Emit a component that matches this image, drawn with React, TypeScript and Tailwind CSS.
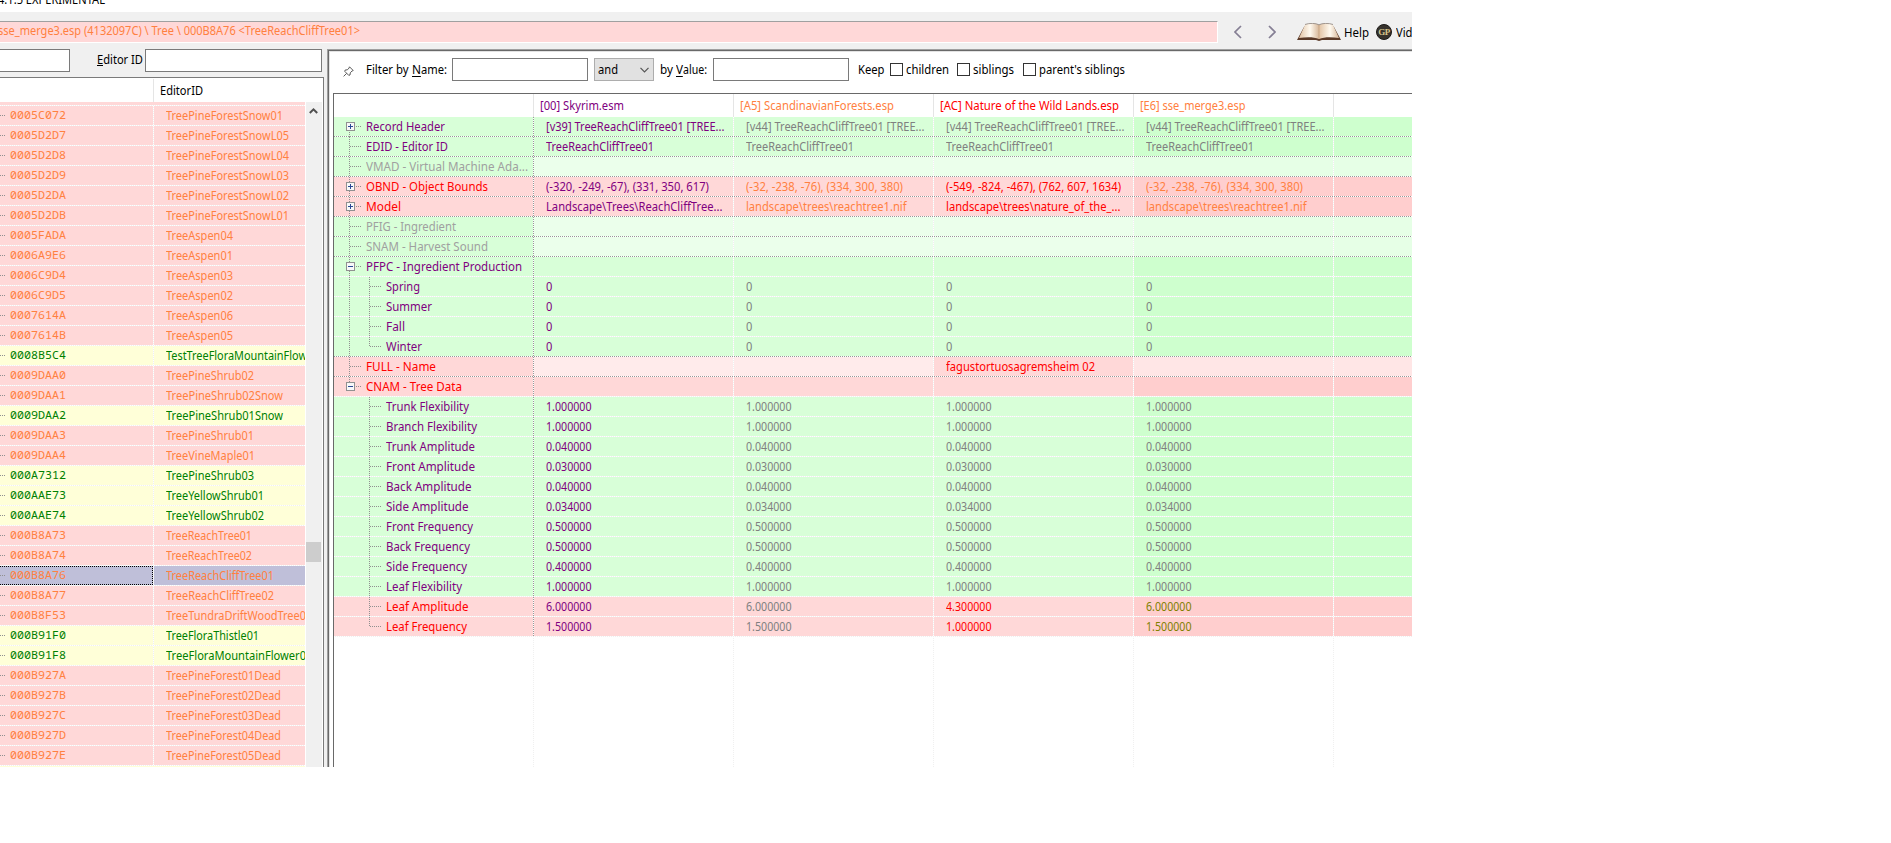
import { useLayoutEffect, useRef } from "react";

const SANS = "font-['Noto_Sans','Open_Sans',sans-serif]";
const MONO = "font-['Noto_Sans_Mono','DejaVu_Sans_Mono',monospace]";

const H_LIGHT = "bg-[repeating-linear-gradient(90deg,#ffffff_0_1px,#f0f0f0_1px_2px)]";
const H_DARK = "bg-[repeating-linear-gradient(90deg,#989898_0_1px,#ffffff_1px_2px)]";
const V_LIGHT = "bg-[repeating-linear-gradient(180deg,#ffffff_0_1px,#f0f0f0_1px_2px)]";
const V_DARK = "bg-[repeating-linear-gradient(180deg,#989898_0_1px,#ffffff_1px_2px)]";
const H_TREE = "bg-[repeating-linear-gradient(90deg,#909090_0_1px,transparent_1px_2px)]";
const V_TREE = "bg-[repeating-linear-gradient(180deg,#909090_0_1px,transparent_1px_2px)]";

/** Text condensed horizontally to a given width (or to the default condensed ratio). */
function Fit({ children, w, className = "" }: { children: string; w?: number; className?: string }) {
  const ref = useRef<HTMLSpanElement>(null);
  useLayoutEffect(() => {
    const el = ref.current;
    if (!el) return;
    el.style.transform = "none";
    el.style.marginRight = "0px";
    const natural = el.getBoundingClientRect().width;
    const target = w ?? natural * 0.925;
    el.style.transform = `scaleX(${target / natural})`;
    el.style.marginRight = `${target - natural}px`;
  }, [children, w]);
  return (
    <span ref={ref} className={`inline-block shrink-0 origin-left whitespace-pre ${className}`}>
      {children}
    </span>
  );
}

type Rec = [id: string, name: string, w?: number, ok?: boolean];
const records: Rec[] = [
  ["0005C072", "TreePineForestSnow01", 117],
  ["0005D2D7", "TreePineForestSnowL05", 123],
  ["0005D2D8", "TreePineForestSnowL04", 123],
  ["0005D2D9", "TreePineForestSnowL03", 123],
  ["0005D2DA", "TreePineForestSnowL02", 123],
  ["0005D2DB", "TreePineForestSnowL01", 123],
  ["0005FADA", "TreeAspen04", 67],
  ["0006A9E6", "TreeAspen01", 67],
  ["0006C9D4", "TreeAspen03", 67],
  ["0006C9D5", "TreeAspen02", 67],
  ["0007614A", "TreeAspen06", 67],
  ["0007614B", "TreeAspen05", 67],
  ["0008B5C4", "TestTreeFloraMountainFlow", 141, true],
  ["0009DAA0", "TreePineShrub02", 88],
  ["0009DAA1", "TreePineShrub02Snow", 117],
  ["0009DAA2", "TreePineShrub01Snow", 117, true],
  ["0009DAA3", "TreePineShrub01", 88],
  ["0009DAA4", "TreeVineMaple01", 89],
  ["000A7312", "TreePineShrub03", 88, true],
  ["000AAE73", "TreeYellowShrub01", 98, true],
  ["000AAE74", "TreeYellowShrub02", 98, true],
  ["000B8A73", "TreeReachTree01", 86],
  ["000B8A74", "TreeReachTree02", 86],
  ["000B8A76", "TreeReachCliffTree01", 108],
  ["000B8A77", "TreeReachCliffTree02", 108],
  ["000B8F53", "TreeTundraDriftWoodTree0", 140],
  ["000B91F0", "TreeFloraThistle01", 93, true],
  ["000B91F8", "TreeFloraMountainFlower0", 140, true],
  ["000B927A", "TreePineForest01Dead", 115],
  ["000B927B", "TreePineForest02Dead", 115],
  ["000B927C", "TreePineForest03Dead", 115],
  ["000B927D", "TreePineForest04Dead", 115],
  ["000B927E", "TreePineForest05Dead", 115],
];

const P = "text-[#800080]";
const R = "text-[#ff0000]";
const O = "text-[#ff8040]";
const G = "text-[#808080]";
const L = "text-[#a0a0a0]";
const Y = "text-[#808000]";

type Cell = [text: string, color: string, w?: number];
interface Row {
  label: string;
  w?: number;
  color: string;
  red?: boolean;
  level?: 0 | 1;
  box?: "+" | "-";
  empty?: boolean;
  dark?: boolean;
  pass?: boolean;
  last?: boolean;
  cells?: (Cell | null)[];
}

const nums = (label: string, v: string, w: number): Row => ({
  label, w, color: P, level: 1,
  cells: [[v, P, 45.5], [v, G, 45.5], [v, G, 45.5], [v, G, 45.5]],
});
const season = (label: string, w: number, last = false): Row => ({
  label, w, color: P, level: 1, pass: true, last, dark: last,
  cells: [["0", P], ["0", G], ["0", G], ["0", G]],
});

const rows: Row[] = [
  {
    label: "Record Header", w: 79, color: P, box: "+", dark: true,
    cells: [
      ["[v39] TreeReachCliffTree01 [TREE...", P, 178.5],
      ["[v44] TreeReachCliffTree01 [TREE...", G, 178.5],
      ["[v44] TreeReachCliffTree01 [TREE...", G, 178.5],
      ["[v44] TreeReachCliffTree01 [TREE...", G, 178.5],
    ],
  },
  {
    label: "EDID - Editor ID", w: 82, color: P, dark: true,
    cells: [
      ["TreeReachCliffTree01", P, 108],
      ["TreeReachCliffTree01", G, 108],
      ["TreeReachCliffTree01", G, 108],
      ["TreeReachCliffTree01", G, 108],
    ],
  },
  { label: "VMAD - Virtual Machine Ada...", w: 162, color: L, empty: true, dark: true },
  {
    label: "OBND - Object Bounds", w: 122, color: R, red: true, box: "+", dark: true,
    cells: [
      ["(-320, -249, -67), (331, 350, 617)", P, 163],
      ["(-32, -238, -76), (334, 300, 380)", O, 157],
      ["(-549, -824, -467), (762, 607, 1634)", R, 175],
      ["(-32, -238, -76), (334, 300, 380)", O, 157],
    ],
  },
  {
    label: "Model", w: 35, color: R, red: true, box: "+", dark: true,
    cells: [
      ["Landscape\\Trees\\ReachCliffTree...", P, 176.5],
      ["landscape\\trees\\reachtree1.nif", O, 160.5],
      ["landscape\\trees\\nature_of_the_...", R, 174.5],
      ["landscape\\trees\\reachtree1.nif", O, 160.5],
    ],
  },
  { label: "PFIG - Ingredient", w: 90, color: L, empty: true, dark: true },
  { label: "SNAM - Harvest Sound", w: 122, color: L, empty: true, dark: true },
  { label: "PFPC - Ingredient Production", w: 156, color: P, box: "-" },
  season("Spring", 34),
  season("Summer", 46),
  season("Fall", 19),
  season("Winter", 36, true),
  {
    label: "FULL - Name", w: 70, color: R, red: true, empty: true, dark: true,
    cells: [null, null, ["fagustortuosagremsheim 02", R, 149], null],
  },
  { label: "CNAM - Tree Data", w: 96, color: R, red: true, box: "-" },
  nums("Trunk Flexibility", "1.000000", 83),
  nums("Branch Flexibility", "1.000000", 91),
  nums("Trunk Amplitude", "0.040000", 89),
  nums("Front Amplitude", "0.030000", 89),
  nums("Back Amplitude", "0.040000", 85.5),
  nums("Side Amplitude", "0.034000", 82.5),
  nums("Front Frequency", "0.500000", 87),
  nums("Back Frequency", "0.500000", 84),
  nums("Side Frequency", "0.400000", 81),
  nums("Leaf Flexibility", "1.000000", 76),
  {
    label: "Leaf Amplitude", w: 82.5, color: R, red: true, level: 1,
    cells: [["6.000000", P, 45.5], ["6.000000", G, 45.5], ["4.300000", R, 45.5], ["6.000000", Y, 45.5]],
  },
  {
    label: "Leaf Frequency", w: 81, color: R, red: true, level: 1, last: true,
    cells: [["1.500000", P, 45.5], ["1.500000", G, 45.5], ["1.000000", R, 45.5], ["1.500000", Y, 45.5]],
  },
];

function cellBg(row: Row, col: number, filled: boolean) {
  const late = col >= 3;
  if (row.empty && !filled) {
    if (row.red) return late ? "bg-[#ffe6e6]" : "bg-[#ffebeb]";
    return late ? "bg-[#e6ffe6]" : "bg-[#ebffeb]";
  }
  if (row.red) return late ? "bg-[#ffcece]" : "bg-[#ffd8d8]";
  return late ? "bg-[#ceffce]" : "bg-[#d8ffd8]";
}

function ExpandBox({ kind }: { kind: "+" | "-" }) {
  return (
    <svg className="absolute left-[12px] top-[5px]" width="9" height="9" shapeRendering="crispEdges">
      <rect x="0" y="0" width="9" height="9" fill="#919191" />
      <rect x="1" y="1" width="7" height="7" fill="#f8f8f8" />
      <rect x="2" y="4" width="5" height="1" fill="#2b4a96" />
      {kind === "+" && <rect x="4" y="2" width="1" height="5" fill="#2b4a96" />}
    </svg>
  );
}

function TreeLines({ row, index }: { row: Row; index: number }) {
  const inner = row.level === 1;
  const lastRoot = row.label.startsWith("CNAM");
  return (
    <>
      {(!inner || row.pass) && (
        <i className={`absolute left-[15px] w-px ${V_TREE} ${index === 0 ? "top-[9px] h-[11px]" : lastRoot ? "top-0 h-[9px]" : "top-0 h-[20px]"}`} />
      )}
      {!inner && <i className={`absolute left-[16px] top-[9px] h-px w-[12px] ${H_TREE}`} />}
      {inner && (
        <>
          <i className={`absolute left-[35px] top-0 w-px ${V_TREE} ${row.last ? "h-[10px]" : "h-[20px]"}`} />
          <i className={`absolute left-[36px] top-[9px] h-px w-[12px] ${H_TREE}`} />
        </>
      )}
      {row.box && <ExpandBox kind={row.box} />}
    </>
  );
}

function Address() {
  return (
    <div className="flex h-[37px] bg-[#f0f0f0] pt-[9px]">
      <div className="flex h-[22px] w-[1218px] shrink-0 overflow-hidden border-t border-r border-b border-t-[#a0a0a0] border-r-white border-b-white bg-[#ffd8d8]">
        <Fit className="-ml-[2px] leading-[18px] text-[#ff8040]" w={362}>
          {"sse_merge3.esp (4132097C) \\ Tree \\ 000B8A76 <TreeReachCliffTree01>"}
        </Fit>
      </div>
      <div className="flex w-[79px] shrink-0 pl-[16px] pt-[4px]">
        <svg width="8" height="14" fill="none" stroke="#857f94" strokeWidth="1.7"><path d="M7 1 1 7l6 6" /></svg>
        <svg className="ml-[26px]" width="8" height="14" fill="none" stroke="#857f94" strokeWidth="1.7"><path d="m1 1 6 6-6 6" /></svg>
      </div>
      <svg className="mt-[2px] shrink-0" width="44" height="18" viewBox="0 0 44 18">
        <defs>
          <linearGradient id="page" x1="0" x2="1">
            <stop offset="0" stopColor="#e2c3a4" />
            <stop offset=".55" stopColor="#fffaf0" />
            <stop offset="1" stopColor="#d8b89a" />
          </linearGradient>
        </defs>
        <path d="M0 17 7 4l1-1h28l1 1 7 13H25l-3 1-3-1z" fill="#5b3a28" />
        <path d="M2 15 8 2c4-2 11-2 14 0v14c-5-2-12-2-20-1z" fill="url(#page)" />
        <path d="M42 15 36 2c-4-2-11-2-14 0v14c5-2 12-2 20-1z" fill="url(#page)" />
        <path d="M22 2v14" stroke="#c9a684" strokeWidth="1" />
        <path d="M8 1.5c4-1.500 11-1.500 14 .3 3-1.800 10-1.800 14-.3" fill="none" stroke="#8c8078" strokeWidth=".8" />
      </svg>
      <Fit className="ml-[3px] mt-[3px] leading-[18px]" w={25}>Help</Fit>
      <span className="ml-[7px] mt-[3px] flex size-[16px] shrink-0 items-center justify-center rounded-full border border-[#1c1a18] bg-[#37322c] font-['Liberation_Serif',serif] text-[9px] font-bold leading-none tracking-[-0.5px] text-[#d8c48a]">
        GP
      </span>
      <Fit className="ml-[4px] mt-[3px] leading-[18px]" w={16.5}>Vid</Fit>
    </div>
  );
}

function Navigator() {
  return (
    <div className="flex w-[327px] shrink-0 flex-col bg-[#f0f0f0]">
      <div className="flex h-[28px]">
        <div className="h-[23px] w-[70px] border border-l-0 border-[#7a7a7a] bg-white" />
        <div className="ml-[27px] flex w-[48px] leading-[22px]">
          <span className="mt-[16px] h-px w-[6px] shrink-0 bg-black" />
          <Fit className="-ml-[6px]" w={46}>Editor ID</Fit>
        </div>
        <div className="h-[23px] w-[177px] border border-[#7a7a7a] bg-white" />
      </div>
      <div className="flex min-h-0 w-[324px] flex-1 flex-col overflow-hidden border-t border-r border-[#7a7a7a] bg-white">
        <div className="flex h-[24px] shrink-0">
          <div className="mt-px w-[154px] border-r border-[#e5e5e5]" />
          <Fit className="ml-[6px] leading-[25px]" w={43}>EditorID</Fit>
        </div>
        <div className="flex min-h-0 flex-1">
          <div className="w-[305px] shrink-0 overflow-hidden">
            <div className="h-[3px] bg-[#ffd8d8]" />
            <div className={`h-px ${H_LIGHT}`} />
            {records.map(([id, name, w, ok]) => {
              const sel = id === "000B8A76";
              const tone = ok ? "bg-[#ffffd8] text-[#008000]" : sel ? "bg-[#bfbfd9] text-[#ff8040]" : "bg-[#ffd8d8] text-[#ff8040]";
              return (
                <div key={id} className={tone}>
                  <div className="flex h-[19px] leading-[19px]">
                    <div className={`flex w-[153px] shrink-0 ${sel ? "border-y border-r border-dotted border-black leading-[17px]" : ""}`}>
                      <i className={`h-px w-[6px] ${sel ? "mt-[8px]" : "mt-[9px]"} ${H_TREE}`} />
                      <Fit className={`ml-[4px] text-[11.67px] -translate-y-px ${MONO}`} w={56}>{id}</Fit>
                    </div>
                    <i className={`w-px shrink-0 ${V_LIGHT}`} />
                    <Fit className="ml-[12px]" w={w}>{name}</Fit>
                  </div>
                  <div className={`h-px ${H_LIGHT}`} />
                </div>
              );
            })}
            <div className="h-px bg-[#ffffd8]" />
          </div>
          <div className="ml-px flex w-[16px] flex-col bg-[#f0f0f0]">
            <svg className="ml-[3px] mt-[5px]" width="9" height="8" fill="none" stroke="#505050" strokeWidth="2"><path d="M.8 6 4.5 2.300 8.200 6" /></svg>
            <div className="mt-[427px] h-[20px] w-[15px] bg-[#cdcdcd]" />
          </div>
        </div>
      </div>
    </div>
  );
}

function Check({ label, w, className }: { label: string; w: number; className: string }) {
  return (
    <label className={`flex shrink-0 pt-[5px] ${className}`}>
      <span className="mr-[3px] size-[13px] border border-[#333333] bg-white" />
      <Fit className="-mt-[2px] leading-[18px]" w={w}>{label}</Fit>
    </label>
  );
}

function FilterBar() {
  return (
    <div className="flex h-[41px] pt-[6px] pl-[13px] leading-[23px]">
      <svg className="mt-[8px] shrink-0" width="11" height="11" viewBox="0 0 11 11" fill="none" stroke="#5a5a5a" strokeWidth="1">
        <path d="M6.500 .8 10.200 4.500 9 5 7.300 6.800 7 9 5.700 9.300 1.800 5.400 2.200 4 4.400 3.800 6.100 2z M3.700 7.300.6 10.400" />
      </svg>
      <div className="ml-[12px] flex w-[86px] shrink-0">
        <Fit w={45.5}>{"Filter by "}</Fit>
        <Fit className="h-[19px] border-b border-black" w={9}>N</Fit>
        <Fit w={26}>ame:</Fit>
      </div>
      <div className="h-[23px] w-[136px] border border-[#7a7a7a] bg-white" />
      <div className="ml-[6px] flex h-[23px] w-[60px] justify-between border border-[#adadad] bg-[#e1e1e1] pl-[3px] pr-[4px] leading-[21px]">
        <Fit w={20}>and</Fit>
        <svg className="mt-[8px]" width="9" height="6" fill="none" stroke="#555" strokeWidth="1.2"><path d="M.5 .8 4.500 4.800 8.500 .8" /></svg>
      </div>
      <div className="ml-[6px] flex w-[53px] shrink-0">
        <Fit w={16}>{"by "}</Fit>
        <Fit className="h-[19px] border-b border-black" w={7}>V</Fit>
        <Fit w={24}>alue:</Fit>
      </div>
      <div className="h-[23px] w-[136px] border border-[#7a7a7a] bg-white" />
      <div className="ml-[9px] w-[32px] shrink-0">
        <Fit w={26.5}>Keep</Fit>
      </div>
      <Check className="w-[67px]" label="children" w={43} />
      <Check className="w-[66px]" label="siblings" w={41} />
      <Check className="" label="parent's siblings" w={86} />
    </div>
  );
}

const heads: Cell[] = [
  ["[00] Skyrim.esm", P, 84],
  ["[A5] ScandinavianForests.esp", O, 154],
  ["[AC] Nature of the Wild Lands.esp", R, 179],
  ["[E6] sse_merge3.esp", O, 105.5],
];

function Grid() {
  return (
    <div className="ml-[3px] flex min-h-0 flex-1 flex-col overflow-hidden border-t border-l border-[#696969]">
      <div className="flex h-[23px] shrink-0">
        <div className="w-[200px] shrink-0 border-r border-[#e5e5e5]" />
        {heads.map(([t, c, w]) => (
          <div key={t} className="w-[200px] shrink-0 border-r border-[#e5e5e5] pl-[6px] leading-[23px]">
            <Fit className={c} w={w}>{t}</Fit>
          </div>
        ))}
      </div>
      {rows.map((row, i) => (
        <div key={row.label} className="shrink-0">
          <div className="flex h-[19px] leading-[19px]">
            <div className={`relative w-[199px] shrink-0 ${row.red ? "bg-[#ffd8d8]" : "bg-[#d8ffd8]"} ${row.level === 1 ? "pl-[52px]" : "pl-[32px]"}`}>
              <TreeLines row={row} index={i} />
              <Fit className={row.color} w={row.w}>{row.label}</Fit>
            </div>
            <i className={`w-px shrink-0 ${V_DARK}`} />
            {[0, 1, 2, 3].map((c) => {
              const cell = row.cells?.[c];
              return (
                <div key={c} className="flex w-[200px] shrink-0">
                  <div className={`w-[199px] pl-[12px] ${cellBg(row, c, !!cell)}`}>
                    {cell && <Fit className={cell[1]} w={cell[2]}>{cell[0]}</Fit>}
                  </div>
                  <i className={`w-px ${V_LIGHT}`} />
                </div>
              );
            })}
            <div className={`flex-1 ${cellBg(row, 4, false)}`} />
          </div>
          <div className={`h-px ${row.dark ? H_DARK : H_LIGHT}`} />
        </div>
      ))}
      <div className="flex flex-1">
        {[0, 1, 2, 3, 4].map((c) => (
          <div key={c} className="flex w-[200px] shrink-0 justify-end">
            <i className={`w-px ${V_LIGHT}`} />
          </div>
        ))}
      </div>
    </div>
  );
}

export default function App() {
  return (
    <div className="h-[843px] w-full overflow-hidden bg-white">
      <div className={`flex h-[767px] w-[1412px] flex-col overflow-hidden text-[12px] text-black ${SANS}`}>
        <div className="flex h-[12px] shrink-0">
          <Fit className="-mt-[9px] -ml-[2px] leading-[18px]" w={107}>4.1.5 EXPERIMENTAL</Fit>
        </div>
        <Address />
        <div className="flex min-h-0 flex-1">
          <Navigator />
          <div className="flex min-w-0 flex-1 border-t border-l border-[#a0a0a0]">
            <div className="flex min-w-0 flex-1 border-t border-l border-[#696969]">
              <div className="flex min-w-0 flex-1 flex-col border-t border-l border-[#e3e3e3]">
                <FilterBar />
                <Grid />
              </div>
            </div>
          </div>
        </div>
      </div>
    </div>
  );
}
